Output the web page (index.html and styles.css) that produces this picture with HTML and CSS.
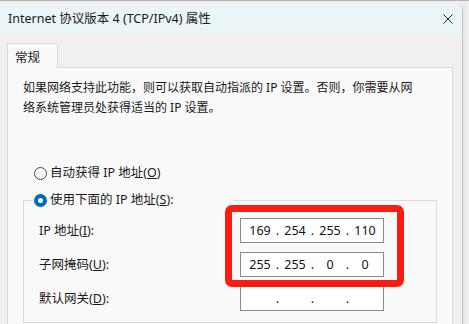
FILE: index.html
```html
<!DOCTYPE html>
<html lang="zh-CN">
<head>
<meta charset="UTF-8">
<title>Internet 协议版本 4 (TCP/IPv4) 属性</title>
<link rel="stylesheet" href="styles.css">
</head>
<body>
    <div class="screen">
        <div class="dialog">
            <!-- title bar -->
            <div class="titlebar">
                <span class="title">Internet 协议版本 4 (TCP/IPv4) 属性</span>
                <svg class="close" viewBox="0 0 10 10"><path d="M0.5 0.5L9.5 9.5M9.5 0.5L0.5 9.5"/></svg>
            </div>

            <div class="dialog-body">
                <div class="tabs">
                    <div class="tab active">常规</div>
                </div>

                <div class="panel">
                    <p class="intro">如果网络支持此功能，则可以获取自动指派的 IP 设置。否则，你需要从网络系统管理员处获得适当的 IP 设置。</p>

                    <label class="radio-row">
                        <span class="radio"></span>
                        <span>自动获得 IP 地址(<u>O</u>)</span>
                    </label>

                    <fieldset class="group">
                        <legend>
                            <label class="radio-row">
                                <span class="radio checked"></span>
                                <span>使用下面的 IP 地址(<u>S</u>):</span>
                            </label>
                        </legend>

                        <div class="rows">
                            <div class="labels">
                                <div class="row-label">IP 地址(<u>I</u>):</div>
                                <div class="row-label">子网掩码(<u>U</u>):</div>
                                <div class="row-label">默认网关(<u>D</u>):</div>
                            </div>
                            <div class="fields">
                                <div class="ip-field">
                                    <span class="oct">169</span><span class="dot">.</span><span class="oct">254</span><span class="dot">.</span><span class="oct">255</span><span class="dot">.</span><span class="oct">110</span>
                                </div>
                                <div class="ip-field">
                                    <span class="oct">255</span><span class="dot">.</span><span class="oct">255</span><span class="dot">.</span><span class="oct">0</span><span class="dot">.</span><span class="oct">0</span>
                                </div>
                                <div class="ip-field">
                                    <span class="oct"></span><span class="dot">.</span><span class="oct"></span><span class="dot">.</span><span class="oct"></span><span class="dot">.</span><span class="oct"></span>
                                </div>
                                <!-- red annotation box drawn over the first two fields -->
                                <div class="mark"></div>
                            </div>
                        </div>
                    </fieldset>
                </div>
            </div>
        </div>
        <div class="behind"></div>
    </div>
</body>
</html>
```

FILE: styles.css
```css
*{margin:0;padding:0;box-sizing:border-box}

body{
    font-family:"Noto Sans","Noto Sans CJK SC",sans-serif;
    font-size:12px;
    color:#1a1a1a;
    background:#eeeeee;
    overflow:hidden;
}

.screen{
    display:flex;
    height:324px;
    padding-top:2px;
    border-top:1px solid #b4b4b4;
    background:#ededed;
}

/* dialog window ------------ */
.dialog{
    width:463px;
    flex:none;
    display:flex;
    flex-direction:column;
    background:#f0f0f0;
    border-right:1px solid #c4c4c4;
    border-top-right-radius:8px;
    overflow:hidden;
}
.titlebar{
    height:31px;
    flex:none;
    display:flex;
    align-items:center;
    justify-content:space-between;
    padding:0 9px 0 8px;
    background:#ebf4f6;
}
.title{font-size:12.5px;line-height:16px;margin-top:1px}
.close{
    width:10px;height:10px;
    stroke:#222;
    stroke-width:1;
    fill:none;
}

.dialog-body{
    flex:1;
    padding:9px 9px 0 7px;
}

.tabs{display:flex}
.tab{
    width:51px;
    height:25px;
    padding:3px 0 0 7px;
    font-size:12.5px;
    background:#f9f9f9;
    border:1px solid #d9d9d9;
    border-bottom:none;
    margin-bottom:-1px;
    position:relative;
    z-index:1;
}

.panel{
    height:300px;
    background:#f9f9f9;
    border:1px solid #d9d9d9;
    padding:10px 15px 0;
}
.intro{
    width:396px;
    line-height:20px;
    font-size:12px;
}

/* radios ------------ */
.radio-row{
    display:flex;
    align-items:center;
    gap:3px;
    height:20px;
    line-height:20px;
    font-size:12.5px;
}
.panel > .radio-row{margin:45px 0 0 11px}
.radio{
    width:13px;height:13px;
    border-radius:50%;
    border:1px solid #4a4a4a;
    background:#f6f6f6;
    flex:none;
}
.radio.checked{
    border:4.5px solid #0067c0;
    background:#fff;
}

/* group box ------------ */
.group{
    margin-top:7px;
    border:1px solid #dcdcdc;
    padding:0 0 0 9px;
}
.group legend{
    width:200px;
    padding:0 1px;
}

.rows{
    display:flex;
    justify-content:space-between;
    padding:8px 52px 11px 6px;
}
.labels{
    display:flex;
    flex-direction:column;
    gap:9px;
}
.row-label{
    height:25px;
    line-height:25px;
    font-size:12.5px;
}

.fields{
    position:relative;
    display:flex;
    flex-direction:column;
    gap:9px;
}
.ip-field{
    width:144px;
    height:25px;
    display:flex;
    align-items:center;
    padding-left:4px;
    background:#fff;
    border:1px solid #8a8a8a;
    font-size:12.5px;
    color:#111;
}
.oct{width:30px;text-align:center}
.dot{width:5px;text-align:center}

.mark{
    position:absolute;
    left:-15px;
    top:-13px;
    width:179px;
    height:82px;
    border:7px solid #fb1c12;
    border-radius:7px;
}

/* window behind the dialog */
.behind{
    flex:1;
    background:linear-gradient(90deg,#e6e6e6,#f2f2f2);
}
```
